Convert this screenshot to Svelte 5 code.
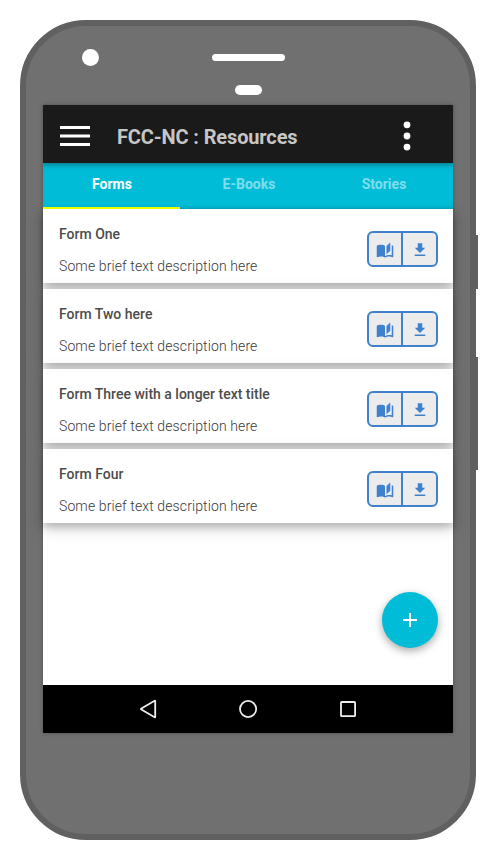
<script>
  const tabs = ['Forms', 'E-Books', 'Stories'];
  const forms = ['Form One', 'Form Two here', 'Form Three with a longer text title', 'Form Four'];
</script>

<div class="phone">
  <i class="side power"></i>
  <i class="side volume"></i>
  <div class="top">
    <i class="camera"></i>
    <div class="sensors">
      <i class="speaker"></i>
      <i class="sensor"></i>
    </div>
  </div>
  <div class="screen">
    <header>
      <svg class="menu" width="30" height="20" viewBox="0 0 30 20"><path fill="#fff" d="M0 0h30v3H0zM0 8.5h30v3H0zM0 17h30v3H0z" /></svg>
      <h1>FCC-NC : Resources</h1>
      <svg class="more" width="8" height="30" viewBox="0 0 8 30" fill="#fff">
        <circle cx="4" cy="3.8" r="3.4" /><circle cx="4" cy="15" r="3.4" /><circle cx="4" cy="26.1" r="3.4" />
      </svg>
    </header>
    <nav class="tabs">
      {#each tabs as tab, i}
        <span class:active={i === 0}>{tab}</span>
      {/each}
    </nav>
    <main>
      {#each forms as title}
        <article>
          <div class="text">
            <h2>{title}</h2>
            <p>Some brief text description here</p>
          </div>
          <div class="actions">
            <button aria-label="Read">
              <svg width="18" height="18" viewBox="0 0 24 24"><path d="M19 2L14 6.5V17.5L19 13V2M6.5 5C4.55 5 2.45 5.4 1 6.5V21.16C1 21.41 1.25 21.66 1.5 21.66C1.6 21.66 1.65 21.59 1.75 21.59C3.1 20.94 5.05 20.5 6.5 20.5C8.45 20.5 10.55 20.9 12 22C13.35 21.15 15.8 20.5 17.5 20.5C19.15 20.5 20.85 20.81 22.25 21.56C22.35 21.61 22.4 21.59 22.5 21.59C22.75 21.59 23 21.34 23 21.09V6.5C22.4 6.05 21.75 5.75 21 5.5V19C19.9 18.65 18.7 18.5 17.5 18.5C15.8 18.5 13.35 19.15 12 20V6.5C10.55 5.4 8.45 5 6.5 5Z" /></svg>
            </button>
            <button aria-label="Download">
              <svg width="18" height="18" viewBox="0 0 24 24"><path d="M5 20H19V18H5M19 9H15V3H9V9H5L12 16L19 9Z" /></svg>
            </button>
          </div>
        </article>
      {/each}
      <button class="fab" aria-label="Add">
        <svg width="24" height="24" viewBox="0 0 24 24"><path fill="#fff" d="M19 13h-6v6h-2v-6H5v-2h6V5h2v6h6z" /></svg>
      </button>
    </main>
    <footer>
      <svg width="20" height="20" viewBox="0 0 20 20"><path d="M17.2 2.1v15.8q0 .6-.6.3L3.4 10.6q-.9-.6 0-1.2L16.6 1.8q.6-.3.6.3z" /></svg>
      <svg width="20" height="20" viewBox="0 0 20 20"><circle cx="10.1" cy="10" r="8.1" /></svg>
      <svg width="20" height="20" viewBox="0 0 20 20"><rect x="3" y="3" width="14.1" height="14.1" rx=".7" /></svg>
    </footer>
  </div>
</div>

<style>
  :global(body) { background: #fff; }
  .phone, .phone * { box-sizing: border-box; }
  .phone {
    position: relative;
    width: 456px;
    height: 820px;
    margin: 20px;
    border: 6px solid #606060;
    border-radius: 66px;
    background: #707070;
    font-family: Roboto, sans-serif;
  }
  i { display: block; }
  .side { position: absolute; left: 450px; width: 2px; background: #606060; }
  .power { top: 209px; height: 54px; }
  .volume { top: 331px; height: 113px; }
  .top { display: flex; height: 79px; padding-left: 56px; }
  .camera { width: 17px; height: 17px; margin-top: 23px; border-radius: 50%; background: #fff; }
  .sensors { display: flex; flex-direction: column; align-items: center; margin: 28px 0 0 113px; }
  .speaker { width: 73px; height: 7px; border-radius: 4px; background: #fff; }
  .sensor { width: 27px; height: 10px; margin-top: 24px; border-radius: 5px; background: #fff; }
  .screen {
    display: flex;
    flex-direction: column;
    width: 410px;
    height: 628px;
    margin-left: 17px;
    background: #fff;
    box-shadow: 0 0 4px rgba(0, 0, 0, .3);
  }
  header {
    position: relative;
    z-index: 2;
    display: flex;
    align-items: center;
    height: 58px;
    padding: 4px 42px 0 17px;
    background: #1a1a1a;
    box-shadow: 0 2px 5px rgba(0, 0, 0, .35);
    clip-path: inset(0 0 -12px 0);
  }
  h1 { flex: 1; margin: 2px 0 0 27px; font-size: 20px; line-height: 24px; font-weight: 700; letter-spacing: -.13px; color: #c6c6c6; }
  .menu, .more { flex: none; }
  .tabs {
    position: relative;
    z-index: 1;
    display: flex;
    height: 46px;
    background: #00bcd7;
    box-shadow: inset 0 -3px 4px -3px rgba(0, 0, 0, .3);
    color: rgba(255, 255, 255, .5);
    font-size: 14px;
    line-height: 42px;
    font-weight: 700;
    text-align: center;
  }
  .tabs span { width: 137px; flex: none; padding-left: 1px; }
  .tabs span:last-child { width: 136px; padding: 0 2px 0 0; }
  .tabs .active { color: #fff; border-bottom: 2px solid #eeff00; }
  main { position: relative; display: flex; flex-direction: column; gap: 6px; height: 476px; }
  article {
    display: flex;
    justify-content: space-between;
    height: 74px;
    padding: 15px 15px 0 16px;
    background: #fff;
    box-shadow: 0 4px 7px rgba(0, 0, 0, .16), 0 4px 15px rgba(0, 0, 0, .22);
  }
  h2 { margin: 0; font-size: 14px; line-height: 20px; font-weight: 500; color: #4c4c4c; }
  p { margin: 12px 0 0; font-size: 14px; line-height: 20px; font-weight: 300; letter-spacing: .11px; color: #3a3a3a; }
  .actions {
    display: flex;
    width: 71px;
    height: 36px;
    margin-top: 7px;
    border: 2px solid #3f81cc;
    border-radius: 6px;
    background: #ececec;
  }
  .actions button {
    display: flex;
    align-items: center;
    justify-content: center;
    flex: none;
    width: 32px;
    padding: 1px 0 0;
    border: 0;
    background: none;
  }
  .actions button + button { width: 35px; padding-left: 1px; border-left: 2px solid #3f81cc; }
  .actions svg { flex: none; fill: #3f81cc; }
  .fab {
    position: absolute;
    right: 15px;
    bottom: 37px;
    display: flex;
    align-items: center;
    justify-content: center;
    width: 56px;
    height: 56px;
    padding: 0;
    border: 0;
    border-radius: 50%;
    background: #00bcd7;
    box-shadow: 0 3px 8px rgba(0, 0, 0, .35);
  }
  footer { display: flex; align-items: center; justify-content: center; gap: 80px; height: 48px; background: #000; }
  footer svg { fill: none; stroke: #eee; stroke-width: 1.8; }
</style>
